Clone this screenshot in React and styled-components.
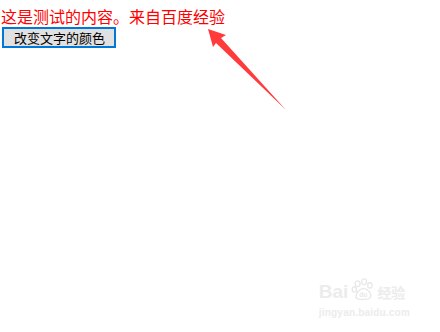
import styled, { createGlobalStyle } from "styled-components";

const GlobalStyle = createGlobalStyle`
  html, body {
    margin: 0;
    padding: 0;
    background: #ffffff;
  }
  body {
    width: 440px;
    height: 332px;
    overflow: hidden;
    font-family: "Noto Sans CJK SC", "Noto Sans", sans-serif;
  }
`;

const Page = styled.div`
  position: relative;
  width: 440px;
  height: 332px;
  padding: 6px 0 0 1px;
  box-sizing: border-box;
`;

const Message = styled.div`
  color: #ff0000;
  font-size: 16px;
  line-height: 20px;
`;

const ColorButton = styled.button`
  display: block;
  margin: 1px 0 0 1px;
  height: 21px;
  padding: 0 9px 0 10px;
  font-family: "Noto Sans CJK SC", sans-serif;
  font-size: 13px;
  line-height: 17px;
  color: #000000;
  background: #e1e1e1;
  border: 2px solid #0078d7;
  border-radius: 0;
  cursor: pointer;
`;

const Arrow = styled.svg`
  position: absolute;
  left: 0;
  top: 0;
  pointer-events: none;
`;

const Watermark = styled.div`
  position: absolute;
  right: 30px;
  bottom: 14px;
  display: flex;
  flex-direction: column;
  align-items: stretch;
  color: #ececec;
  font-family: "Liberation Sans", Arial, sans-serif;
`;

const MarkRow = styled.div`
  display: flex;
  align-items: flex-end;
  gap: 3px;
  font-size: 19px;
  font-weight: bold;
  line-height: 18px;
`;

const MarkWords = styled.span`
  font-family: "Noto Sans CJK SC", sans-serif;
  font-size: 14px;
  line-height: 18px;
`;

const MarkSite = styled.div`
  font-size: 10px;
  font-weight: bold;
  line-height: 11px;
  margin-top: 6px;
  letter-spacing: 0.2px;
`;

function App() {
  return (
    <>
      <GlobalStyle />
      <Page>
        <Message>这是测试的内容。来自百度经验</Message>
        <ColorButton>改变文字的颜色</ColorButton>

        <Arrow width="440" height="332" viewBox="0 0 440 332">
          <polygon
            points="208,29 226,35 221,38 286,110 216,43 213,47"
            fill="#ff3b3b"
          />
        </Arrow>

        <Watermark>
          <MarkRow>
            <span>Bai</span>
            <svg width="23" height="23" viewBox="0 0 28 28">
              <g fill="none" stroke="#e8e8e8" strokeWidth="1.6">
                <ellipse cx="8" cy="7" rx="3" ry="3.5" />
                <ellipse cx="16" cy="4.5" rx="3" ry="3.5" />
                <ellipse cx="23" cy="9" rx="2.6" ry="3.2" />
                <ellipse cx="4" cy="14" rx="2.6" ry="3.2" />
                <path d="M6 24 C6 16 12 13 15 13 C19 13 25 17 24 23 C23 27 8 27 6 24 Z" />
              </g>
              <text x="15" y="23" fontSize="8" fill="#e8e8e8" textAnchor="middle" fontFamily="Liberation Sans">du</text>
            </svg>
            <MarkWords>经验</MarkWords>
          </MarkRow>
          <MarkSite>jingyan.baidu.com</MarkSite>
        </Watermark>
      </Page>
    </>
  );
}

export default App;
